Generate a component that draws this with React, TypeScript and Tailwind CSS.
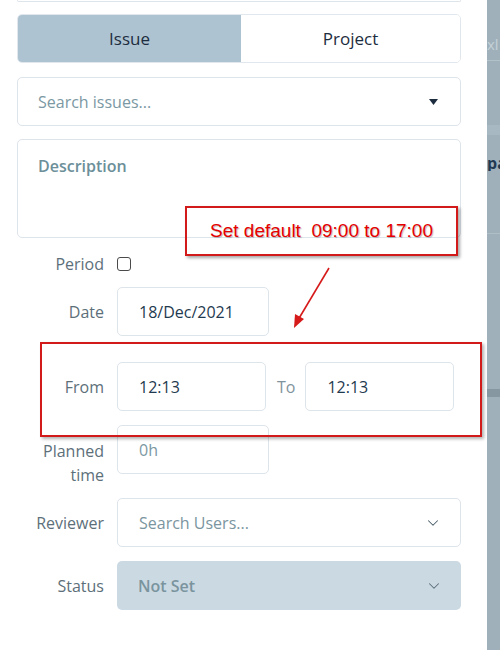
import { ChevronDown } from "lucide-react";

const font = { fontFamily: '"Open Sans", "Noto Sans", sans-serif' };

function Label({ children }: { children: React.ReactNode }) {
  return (
    <div className="w-[87px] shrink-0 text-right text-[16px] leading-[24px] text-[#5d707a]">
      {children}
    </div>
  );
}

export default function App() {
  return (
    <div className="flex h-[650px] w-[500px] overflow-hidden bg-white" style={font}>
      {/* drawer panel */}
      <div className="relative w-[487px] shrink-0 bg-white pl-[17px] pr-[26px]">
        {/* bottom of a field above, cut off */}
        <div className="h-[2px] rounded-b-[5px] border-x border-b border-[#dde4ea]" />

        {/* tabs */}
        <div className="mt-[12px] flex h-[49px] overflow-hidden rounded-[5px] border border-[#e1e7ec]">
          <button className="flex w-[223px] items-center justify-center bg-[#adc3d2] text-[17px] font-medium text-[#1d2d40]">
            Issue
          </button>
          <button className="flex flex-1 items-center justify-center bg-white text-[17px] font-medium text-[#1d2d40]">
            Project
          </button>
        </div>

        {/* search issues */}
        <div className="mt-[14px] flex h-[49px] items-center justify-between rounded-[5px] border border-[#dde4ea] pl-[20px] pr-[22px]">
          <span className="text-[16px] text-[#7b98a3]">Search issues...</span>
          <svg width="9" height="6" viewBox="0 0 9 6">
            <path d="M0 0h9L4.5 6z" fill="#1d2d40" />
          </svg>
        </div>

        {/* description */}
        <div className="mt-[13px] h-[99px] rounded-[5px] border border-[#dde4ea] pl-[20px] pt-[14px]">
          <span className="text-[16px] font-semibold text-[#6c8f99]">Description</span>
        </div>

        {/* period */}
        <div className="mt-[16px] flex h-[20px] items-center gap-[13px]">
          <Label>Period</Label>
          <div className="h-[14px] w-[14px] rounded-[3px] border border-[#4a4a4a] bg-white" />
        </div>

        {/* date */}
        <div className="mt-[13px] flex items-center gap-[13px]">
          <Label>Date</Label>
          <div className="flex h-[49px] w-[152px] items-center rounded-[5px] border border-[#dde4ea] pl-[21px] text-[16px] font-medium text-[#1f3a4f]">
            18/Dec/2021
          </div>
        </div>

        {/* from / to */}
        <div className="mt-[26px] flex items-center gap-[13px]">
          <Label>From</Label>
          <div className="flex h-[49px] w-[149px] items-center rounded-[5px] border border-[#dde4ea] pl-[21px] text-[16px] font-medium text-[#1f3a4f]">
            12:13
          </div>
          <span className="-ml-[2px] text-[16px] text-[#7f939c]">To</span>
          <div className="-ml-[3px] flex h-[49px] w-[149px] items-center rounded-[5px] border border-[#dde4ea] pl-[21px] text-[16px] font-medium text-[#1f3a4f]">
            12:13
          </div>
        </div>

        {/* planned time */}
        <div className="mt-[14px] flex h-[62px] items-start gap-[13px]">
          <div className="pt-[14px]">
            <Label>
              Planned
              <br />
              time
            </Label>
          </div>
          <div className="flex h-[49px] w-[152px] items-center rounded-[5px] border border-[#dde4ea] pl-[21px] text-[16px] font-medium text-[#7b98a3]">
            0h
          </div>
        </div>

        {/* reviewer */}
        <div className="mt-[11px] flex items-center gap-[13px]">
          <Label>Reviewer</Label>
          <div className="flex h-[49px] flex-1 items-center justify-between rounded-[5px] border border-[#dde4ea] pl-[21px] pr-[18px]">
            <span className="text-[16px] font-medium text-[#7b95a0]">Search Users...</span>
            <ChevronDown size={18} strokeWidth={1.4} color="#4b5d68" />
          </div>
        </div>

        {/* status */}
        <div className="mt-[14px] flex items-center gap-[13px]">
          <Label>Status</Label>
          <div className="flex h-[49px] flex-1 items-center justify-between rounded-[5px] bg-[#cbd9e3] pl-[21px] pr-[18px]">
            <span className="text-[16px] font-semibold text-[#7a949e]">Not Set</span>
            <ChevronDown size={18} strokeWidth={1.4} color="#5b6d78" />
          </div>
        </div>

        {/* annotation: callout box */}
        <div className="absolute left-[185px] top-[206px] flex h-[50px] w-[273px] items-center justify-center border-2 border-[#d21a1a] shadow-[2px_2px_3px_rgba(0,0,0,0.35)]">
          <span
            className="text-[19px] text-[#e50000] [text-shadow:1px_1px_1px_rgba(0,0,0,0.25)]"
            style={{ fontFamily: '"Liberation Sans", Arial, sans-serif' }}
          >
            Set default&nbsp; 09:00 to 17:00
          </span>
        </div>

        {/* annotation: arrow */}
        <svg className="absolute left-[285px] top-[262px]" width="52" height="72" viewBox="0 0 52 72">
          <line x1="44" y1="6" x2="13" y2="58" stroke="#d61a1a" strokeWidth="1.6" />
          <path d="M9 66 L10 52 L19 57 Z" fill="#d61a1a" />
        </svg>

        {/* annotation: highlight around time fields */}
        <div className="absolute left-[40px] top-[342px] h-[95px] w-[442px] border-2 border-[#d21a1a] shadow-[2px_2px_3px_rgba(0,0,0,0.3)]" />
      </div>

      {/* dimmed page behind the drawer */}
      <div className="flex flex-1 flex-col bg-[#9fb0bb]">
        <div className="mt-[36px] h-[16px] overflow-hidden text-[15px] leading-[16px] text-[#c4d0d6]">xl</div>
        <div className="mt-[8px] h-px bg-[#b3c1c9]" />
        <div className="mt-[64px] h-[10px] bg-[#a8b8c2]" />
        <div className="mt-[20px] overflow-hidden whitespace-nowrap text-[16px] font-bold leading-[16px] text-[#1f3a52]">pa</div>
        <div className="mt-[62px] h-px bg-[#b0bec6]" />
        <div className="mt-[155px] h-[8px] bg-[#8797a2]" />
      </div>
    </div>
  );
}
